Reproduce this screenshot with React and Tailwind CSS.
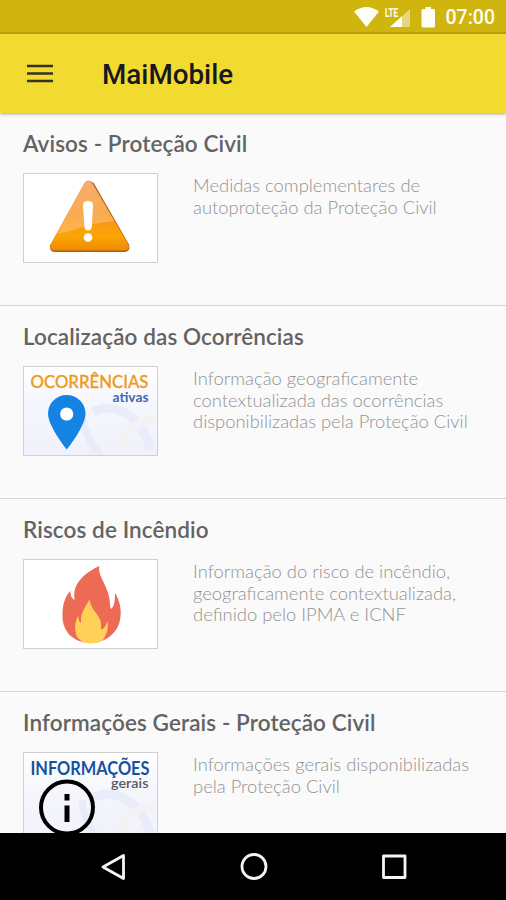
const WarningArt = () => (
  <svg viewBox="0 0 133 88" className="block w-full h-full">
    <defs>
      <linearGradient id="warnBody" x1="0" y1="0" x2="0" y2="1">
        <stop offset="0" stopColor="#f3a05c" />
        <stop offset="0.5" stopColor="#f79420" />
        <stop offset="0.8" stopColor="#fca503" />
        <stop offset="1" stopColor="#ee8a05" />
      </linearGradient>
      <linearGradient id="warnGloss" x1="0" y1="0" x2="0" y2="1">
        <stop offset="0" stopColor="#ffd0a0" stopOpacity="0.25" />
        <stop offset="1" stopColor="#ffd0a0" stopOpacity="0.45" />
      </linearGradient>
      <clipPath id="warnClip">
        <path d="M60 10.500Q64 4.500 69 10.500L104 71Q107 78 100 78H31Q24 78 27 71Z" />
      </clipPath>
    </defs>
    <path d="M61 9.500Q65 4.500 70 9.500L105 70.500Q107 78 100 78H31Q25 77.500 26 71.500Z" fill="#a9601e" />
    <path d="M60 9.500Q64 3.500 68.500 9.500L104 70Q107 76.500 100 76.500H31Q24 76.500 27 70Z" fill="url(#warnBody)" />
    <path d="M20 0H92V47Q66 49 52 55Q40 60 20 61Z" fill="url(#warnGloss)" clipPath="url(#warnClip)" />
    <path d="M59 31Q59 27 64 27Q69 27 69 31L67.800 53Q67 56.500 64 56.500Q61 56.500 60.500 53Z" fill="#fff" />
    <circle cx="64" cy="63.500" r="4.300" fill="#fff" />
  </svg>
);

const SoftBackdrop = ({ id }) => (
  <>
    <defs>
      <linearGradient id={id} x1="0" y1="0" x2="0" y2="1">
        <stop offset="0" stopColor="#ffffff" />
        <stop offset="0.4" stopColor="#f6f7fd" />
        <stop offset="1" stopColor="#f0f1fb" />
      </linearGradient>
    </defs>
    <rect width="133" height="88" fill={`url(#${id})`} />
    <path d="M58 47Q61 73 77 89" fill="none" stroke="#e9ebf9" strokeWidth="7" />
    <path d="M69 45Q88 35 107 50Q121 61 127 82" fill="none" stroke="#e9ecf9" strokeWidth="9" />
    <path d="M96 89Q96 67 112 58Q123 52 133 54" fill="none" stroke="#f4f2f5" strokeWidth="8" />
  </>
);

const OccurrencesArt = () => (
  <svg viewBox="0 0 133 88" className="block w-full h-full">
    <SoftBackdrop id="occBg" />
    <text x="6.500" y="21" textLength="118" lengthAdjust="spacingAndGlyphs" fill="#f09a1c" stroke="#f09a1c" strokeWidth="0.300" className="font-[Lato,sans-serif] text-[18px] font-medium">OCORRÊNCIAS</text>
    <text x="88.500" y="34.500" textLength="36" lengthAdjust="spacingAndGlyphs" fill="#3f68b1" className="font-[Lato,sans-serif] text-[13px] font-bold">ativas</text>
    <path d="M42.700 28C32.400 28 24 36.200 24 46.500C24 59.500 42.700 82.500 42.700 82.500S61.500 59.500 61.500 46.500C61.500 36.200 53 28 42.700 28Z" fill="#1583e3" />
    <circle cx="42.700" cy="47" r="6.600" fill="#fff" />
  </svg>
);

const FireArt = () => (
  <svg viewBox="0 0 133 88" className="block w-full h-full">
    <path d="M75.500 6C73 15 84 26 85.500 39C86 44 86 47 87 49C91 46 91 38 91 33C96 41 98 51 96 60C94 72 82 83 67 83C50 83 38 72 38.500 55C38.500 45 41 36 46.500 31C46.500 36 47.500 38 50.500 40C49 27 54 21 62 14C68 10 71 8 75.500 6Z" fill="#ed6a54" />
    <path d="M65.500 39C66 49 76 55 77 63C77 66 77 68 77.500 70C80.500 68 82.500 65 83.500 61C85 69 82 75 79 80Q74 83.500 66 83.500Q58 83 53 77C50 68 51 62 54 56C55 60 55 62 57 63C56 52 62 47 65.500 39Z" fill="#ffd159" />
  </svg>
);

const InfoArt = () => (
  <svg viewBox="0 0 133 88" className="block w-full h-full">
    <SoftBackdrop id="infoBg" />
    <text x="6.500" y="21.500" textLength="119" lengthAdjust="spacingAndGlyphs" fill="#16529f" className="font-[Lato,sans-serif] text-[18px] font-bold">INFORMAÇÕES</text>
    <text x="87" y="34.500" textLength="37.500" lengthAdjust="spacingAndGlyphs" fill="#555969" className="font-[Lato,sans-serif] text-[13px] font-semibold">gerais</text>
    <circle cx="43" cy="54.500" r="26" fill="none" stroke="#000" strokeWidth="4" />
    <path d="M40.500 41h5v6.500h-5zM40.500 52.500h5v16.500h-5z" fill="#000" />
  </svg>
);

const items = [
  {
    title: 'Avisos - Proteção Civil',
    lines: ['Medidas complementares de', 'autoproteção da Proteção Civil'],
    Art: WarningArt,
  },
  {
    title: 'Localização das Ocorrências',
    lines: ['Informação geograficamente', 'contextualizada das ocorrências', 'disponibilizadas pela Proteção Civil'],
    Art: OccurrencesArt,
  },
  {
    title: 'Riscos de Incêndio',
    lines: ['Informação do risco de incêndio,', 'geograficamente contextualizada,', 'definido pelo IPMA e ICNF'],
    Art: FireArt,
  },
  {
    title: 'Informações Gerais - Proteção Civil',
    lines: ['Informações gerais disponibilizadas', 'pela Proteção Civil'],
    Art: InfoArt,
  },
];

const StatusBar = () => (
  <div className="h-[34px] shrink-0 bg-[#d0b50e] border-b-2 border-[#bfa30f] flex items-center justify-end pr-[11px]">
    <svg width="90" height="32" viewBox="0 0 90 32" className="shrink-0">
      <path d="M0 11.500Q12.500 2.500 25 11.500L12.500 27Z" fill="#fffef4" />
      <path d="M56 9V27H36Z" fill="#e6d680" />
      <path d="M48 16.200V27H36Z" fill="#fffef4" />
      <text x="31" y="16.500" textLength="13" lengthAdjust="spacingAndGlyphs" fill="#fffef4" className="font-[Roboto,sans-serif] text-[12px] font-bold">LTE</text>
      <path d="M71.500 7H77V9H79.500Q81 9 81 10.500V26Q81 27.500 79.500 27.500H69Q67.500 27.500 67.500 26V10.500Q67.500 9 69 9H71.500Z" fill="#fffef4" />
    </svg>
    <span className="font-[Roboto,sans-serif] font-medium text-[19.500px] leading-none text-[#fffef4] pt-[4px] ml-[2px]">07:00</span>
  </div>
);

const AppBar = () => (
  <header className="relative h-[79px] shrink-0 bg-[#f2db31] shadow-[0_1px_3px_rgba(0,0,0,0.35)] flex items-center pl-[27px]">
    <svg width="26" height="20" viewBox="0 0 26 20" className="mr-[49px]">
      <path d="M0 2H26M0 9.500H26M0 17H26" stroke="#35331f" strokeWidth="2.300" />
    </svg>
    <h1 className="font-[Roboto,sans-serif] font-medium text-[27.800px] leading-none text-[#17181f] pt-[3px]">MaiMobile</h1>
  </header>
);

const ListItem = ({ title, lines, Art }) => (
  <section className="h-[193px] shrink-0 border-b border-[#d5d5d5] pl-[23px] pt-[17px]">
    <h2 className="font-semibold text-[22.500px] tracking-[0.100px] leading-[28px] text-[#636363] whitespace-nowrap">{title}</h2>
    <div className="flex mt-[15px]">
      <div className="w-[135px] h-[90px] shrink-0 border border-[#d0d0d0] bg-white">
        <Art />
      </div>
      <p className="ml-[35px] pt-[2px] font-light text-[18.400px] leading-[21.600px] text-[#929292] whitespace-nowrap">
        {lines.map((line) => (
          <span key={line} className="block">{line}</span>
        ))}
      </p>
    </div>
  </section>
);

const NavBar = () => (
  <nav className="h-[67px] shrink-0 bg-black flex items-center justify-center gap-[112px] pl-px">
    <svg width="28" height="28" viewBox="0 0 28 28" fill="none" stroke="#f5f5f5" strokeWidth="2.800" strokeLinejoin="round">
      <path d="M3 14L23.500 2.500V25.500Z" />
    </svg>
    <svg width="28" height="28" viewBox="0 0 28 28" fill="none" stroke="#f5f5f5" strokeWidth="2.800">
      <circle cx="14" cy="13.500" r="12" />
    </svg>
    <svg width="28" height="28" viewBox="0 0 28 28" fill="none" stroke="#f5f5f5" strokeWidth="2.800" strokeLinejoin="round">
      <rect x="3.500" y="3" width="21.500" height="21.500" />
    </svg>
  </nav>
);

export default function App() {
  return (
    <div className="w-[506px] h-[900px] flex flex-col overflow-hidden bg-[#fafafa] font-[Lato,sans-serif]">
      <StatusBar />
      <AppBar />
      <main className="flex-1 min-h-0 overflow-hidden flex flex-col">
        {items.map((item) => (
          <ListItem key={item.title} {...item} />
        ))}
      </main>
      <NavBar />
    </div>
  );
}
